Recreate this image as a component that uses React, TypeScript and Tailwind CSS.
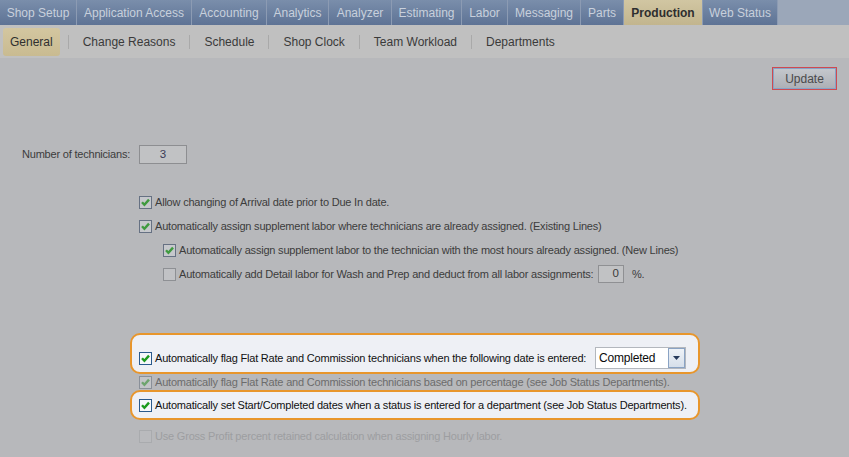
import React from "react";

type CV = "hl" | "dim" | "pale" | "off" | "dis";

function Check({ v }: { v: CV }) {
  const box: Record<CV, string> = {
    hl: "border-[#2a5a8c] bg-[#f6f7fa]",
    dim: "border-[#667183] bg-[#c6c8cc]",
    pale: "border-[#8a9099] bg-[#c3c5c8]",
    off: "border-[#8e9094] bg-[#c1c2c5]",
    dis: "border-[#a9abae] bg-[#b9babd]",
  };
  const checked = v === "hl" || v === "dim" || v === "pale";
  const color = v === "hl" ? "#1c9a1c" : v === "dim" ? "#3f9a3f" : "#6ea46e";
  return (
    <span className={`inline-flex w-[13px] h-[13px] border ${box[v]} items-center justify-center shrink-0`}>
      {checked && (
        <svg width="11" height="11" viewBox="0 0 11 11">
          <path d="M2 5.2 L4.4 7.8 L9 2.6" stroke={color} strokeWidth="2.4" fill="none" strokeLinejoin="miter" />
        </svg>
      )}
    </span>
  );
}

const topTabs: [string, number][] = [
  ["Shop Setup", 77],
  ["Application Access", 115],
  ["Accounting", 75],
  ["Analytics", 62],
  ["Analyzer", 63],
  ["Estimating", 70],
  ["Labor", 46],
  ["Messaging", 73],
  ["Parts", 43],
  ["Production", 79],
  ["Web Status", 75],
];

const subTabs = ["Change Reasons", "Schedule", "Shop Clock", "Team Workload", "Departments"];

const txt = "text-[11px] tracking-[-0.2px] leading-none";

export default function App() {
  return (
    <div className="w-[849px] h-[457px] overflow-hidden bg-[#b7b8bb] font-['Liberation_Sans',Arial,sans-serif] text-[#3c3c3c]">
      {/* top tabs */}
      <div className="flex h-[25px] bg-[#9ba7b9]">
        {topTabs.map(([t, w]) =>
          t === "Production" ? (
            <div
              key={t}
              style={{ width: w }}
              className="flex items-center justify-center bg-gradient-to-b from-[#d1c6a2] to-[#c2b58e] text-[12px] font-bold text-[#2e2e2e] border-r border-[#8c9bb3]"
            >
              {t}
            </div>
          ) : (
            <div
              key={t}
              style={{ width: w }}
              className="flex items-center justify-center bg-gradient-to-b from-[#7a8eab] to-[#5e7395] text-[12px] text-[#c8d0dc] border-r border-[#8c9bb3]"
            >
              {t}
            </div>
          )
        )}
      </div>

      {/* sub tabs */}
      <div className="flex h-[33px] items-center bg-[#c0c0c0] pl-[3px]">
        <div className="h-[28px] px-[7px] flex items-center rounded-[3px] bg-gradient-to-b from-[#d3c6a0] to-[#c9bb91] text-[12px] text-[#2f2f2f]">
          General
        </div>
        <div className="ml-[8px] flex items-center">
          {subTabs.map((s) => (
            <div key={s} className="flex items-center">
              <span className="w-px h-[14px] bg-[#a9a9a9]" />
              <span className="px-[14px] text-[12px] text-[#3a3a3a]">{s}</span>
            </div>
          ))}
        </div>
      </div>

      {/* content */}
      <div className="flex justify-end pt-[9px] pr-[12px]">
        <div className="w-[65px] h-[23px] border border-[#cf4a50]">
          <div className="w-full h-full border border-[#86a2c6] bg-gradient-to-b from-[#c4c7cc] to-[#adb0b6] flex items-center justify-center text-[12px] text-[#4a4a4a]">
            Update
          </div>
        </div>
      </div>

      <div className="mt-[55px] pl-[22px] flex items-center h-[19px]">
        <span className={`w-[117px] ${txt}`}>Number of technicians:</span>
        <div className="w-[48px] h-[19px] border border-[#8d8e91] bg-[#c1c2c4] flex items-center justify-center text-[11.5px] text-[#3a3a55]">
          3
        </div>
      </div>

      <div className="mt-[26px]">
        <div className="h-[24px] flex items-center pl-[139px]">
          <Check v="dim" />
          <span className={`ml-[3px] ${txt}`}>Allow changing of Arrival date prior to Due In date.</span>
        </div>
        <div className="h-[24px] flex items-center pl-[139px]">
          <Check v="dim" />
          <span className={`ml-[3px] ${txt}`}>
            Automatically assign supplement labor where technicians are already assigned. (Existing Lines)
          </span>
        </div>
        <div className="h-[24px] flex items-center pl-[163px]">
          <Check v="dim" />
          <span className={`ml-[3px] ${txt}`}>
            Automatically assign supplement labor to the technician with the most hours already assigned. (New Lines)
          </span>
        </div>
        <div className="h-[24px] flex items-center pl-[163px]">
          <Check v="off" />
          <span className={`ml-[3px] ${txt}`}>
            Automatically add Detail labor for Wash and Prep and deduct from all labor assignments:
          </span>
        </div>
      </div>

      <div className="relative">
        {/* percent field at the end of the row above */}
        <div className="absolute left-[598px] top-[-21px] flex items-center">
          <div className="w-[26px] h-[18px] border border-[#8f9093] bg-[#c1c2c4] flex items-center justify-end pr-[4px] text-[11.5px] text-[#3a3a3a]">
            0
          </div>
          <span className={`ml-[8px] ${txt}`}>%.</span>
        </div>
      </div>

      <div className="mt-[47px] ml-[130px] w-[570px] h-[41px] rounded-[10px] border-2 border-[#e8962c] bg-[#eef0f5] pl-[7px] pt-[12px] flex items-start">
        <div className="h-[22px] flex items-center flex-1">
          <Check v="hl" />
          <span className={`ml-[3px] ${txt} text-[#111]`}>
            Automatically flag Flat Rate and Commission technicians when the following date is entered:
          </span>
          <div className="ml-auto mr-[12px] w-[91px] h-[22px] border border-[#b3b7bd] bg-white flex items-center">
            <span className="pl-[3px] flex-1 text-[12px] text-[#0a0a0a] tracking-[-0.2px]">Completed</span>
            <div className="w-[17px] h-[20px] border border-[#8aa3c4] bg-gradient-to-b from-[#eef2f7] to-[#d6dfea] flex items-center justify-center">
              <svg width="7" height="4" viewBox="0 0 7 4">
                <path d="M0 0 H7 L3.5 4 Z" fill="#26395a" />
              </svg>
            </div>
          </div>
        </div>
      </div>

      <div className="h-[16px] flex items-center pl-[139px]">
        <Check v="pale" />
        <span className={`ml-[3px] ${txt} text-[#6c6c6c]`}>
          Automatically flag Flat Rate and Commission technicians based on percentage (see Job Status Departments).
        </span>
      </div>

      <div className="ml-[130px] w-[570px] h-[30px] rounded-[10px] border-2 border-[#e8962c] bg-[#eef0f5] pl-[7px] flex items-center">
        <Check v="hl" />
        <span className={`ml-[3px] ${txt} text-[#111]`}>
          Automatically set Start/Completed dates when a status is entered for a department (see Job Status Departments).
        </span>
      </div>

      <div className="mt-[4px] h-[24px] flex items-center pl-[139px]">
        <Check v="dis" />
        <span className={`ml-[3px] ${txt} text-[#9d9ea1]`}>
          Use Gross Profit percent retained calculation when assigning Hourly labor.
        </span>
      </div>
    </div>
  );
}
